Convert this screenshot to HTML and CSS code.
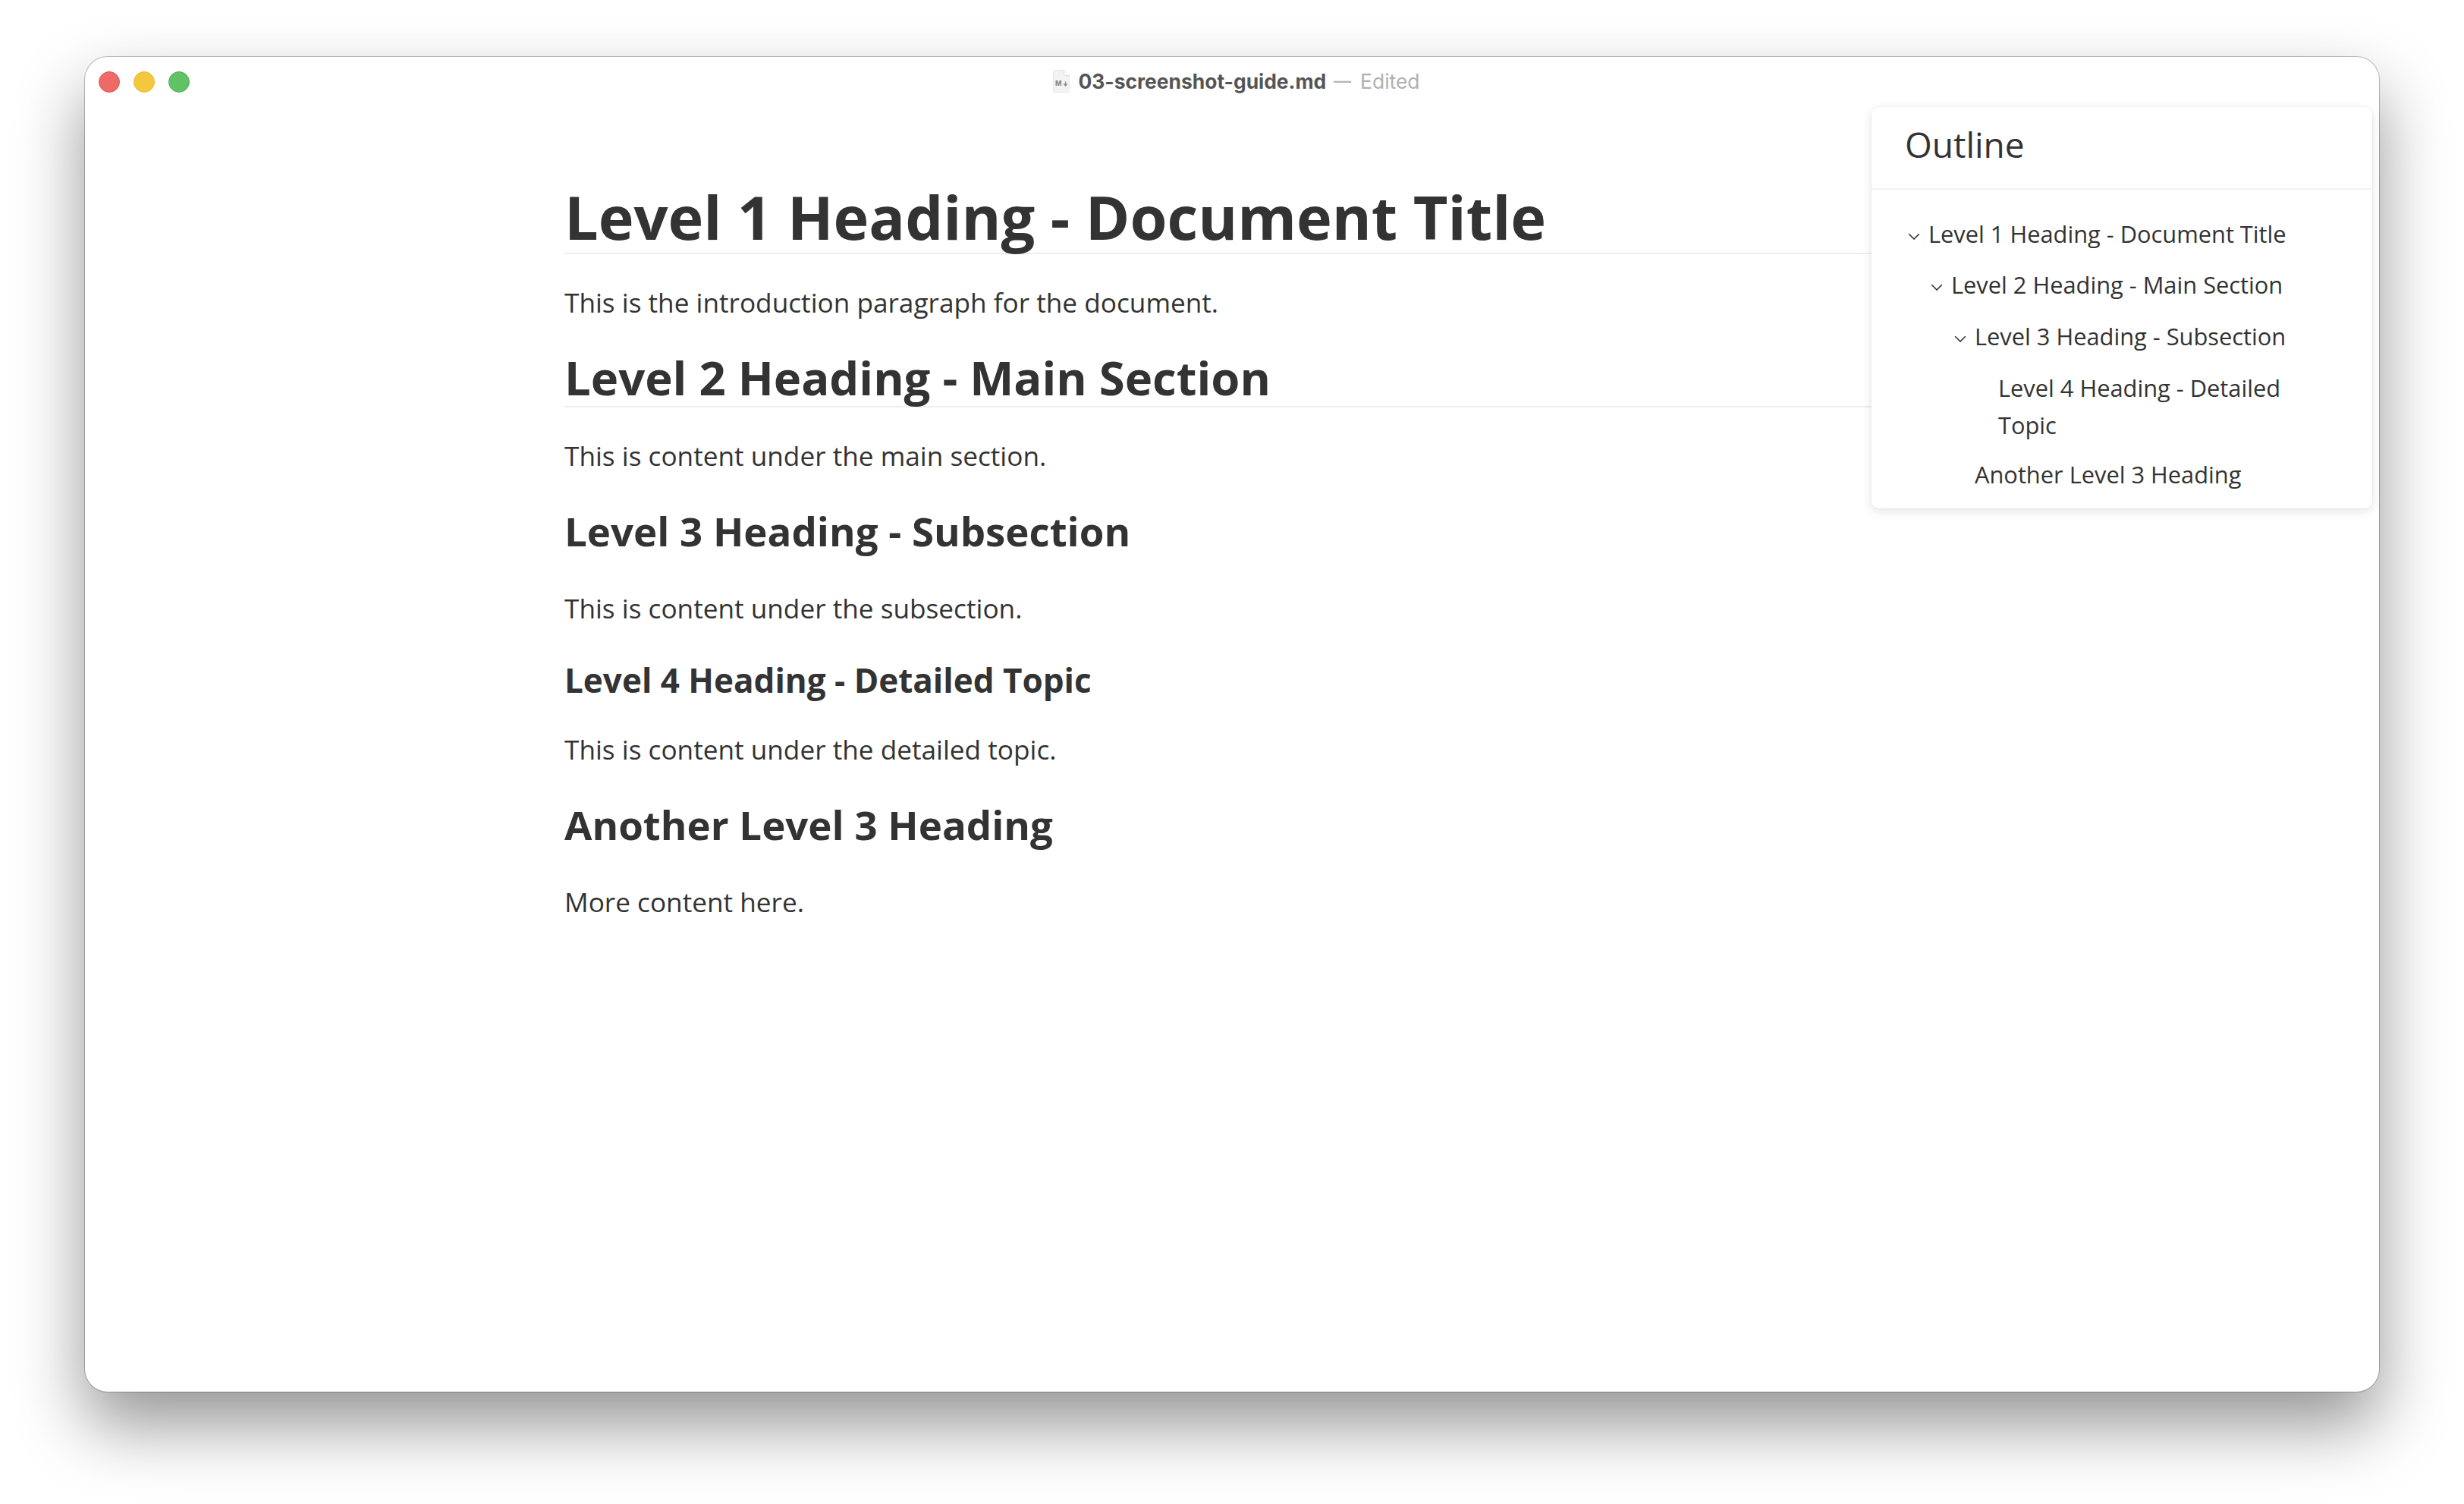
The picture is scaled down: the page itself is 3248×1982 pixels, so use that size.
FILE: index.html
```html
<!DOCTYPE html>
<html lang="en">
<head>
<meta charset="utf-8">
<title>03-screenshot-guide.md — Edited</title>
<link rel="stylesheet" href="styles.css">
</head>
<body>
<div class="window">
  <header class="titlebar">
    <div class="lights">
      <span class="light red"></span>
      <span class="light yellow"></span>
      <span class="light green"></span>
    </div>
    <div class="title">
      <svg class="file-icon" width="22" height="30" viewBox="0 0 22 30">
        <path d="M.5 2.500a2 2 0 0 1 2-2h12l7 7V27.500a2 2 0 0 1-2 2h-17a2 2 0 0 1-2-2z" fill="#f3f3f3" stroke="#e6e6e6"/>
        <path d="M14.500.5v5a2 2 0 0 0 2 2h5" fill="#fcfcfc" stroke="#dedede"/>
        <text class="md-mark" x="3" y="20.500">M</text>
        <path d="M16.500 15.500v5M14.200 18.500l2.300 2.400 2.300-2.400" fill="none" stroke="#8c8c8c" stroke-width="1.4"/>
      </svg>
      <span class="filename">03-screenshot-guide.md</span>
      <span class="dash">—</span>
      <span class="edited">Edited</span>
    </div>
  </header>
  <main class="doc">
    <h1>Level 1 Heading - Document Title</h1>
    <p>This is the introduction paragraph for the document.</p>
    <h2>Level 2 Heading - Main Section</h2>
    <p>This is content under the main section.</p>
    <h3>Level 3 Heading - Subsection</h3>
    <p>This is content under the subsection.</p>
    <h4>Level 4 Heading - Detailed Topic</h4>
    <p>This is content under the detailed topic.</p>
    <h3>Another Level 3 Heading</h3>
    <p>More content here.</p>
  </main>
  <aside class="outline">
    <div class="outline-title">Outline</div>
    <ul class="outline-list">
      <li class="item lvl1"><svg class="chev" width="16" height="9" viewBox="0 0 16 9"><path d="M1.200 1.200L8 8l6.800-6.800" fill="none" stroke="#333" stroke-width="1.6"/></svg>Level 1 Heading - Document Title</li>
      <li class="item lvl2"><svg class="chev" width="16" height="9" viewBox="0 0 16 9"><path d="M1.200 1.200L8 8l6.800-6.800" fill="none" stroke="#333" stroke-width="1.6"/></svg>Level 2 Heading - Main Section</li>
      <li class="item lvl3"><svg class="chev" width="16" height="9" viewBox="0 0 16 9"><path d="M1.200 1.200L8 8l6.800-6.800" fill="none" stroke="#333" stroke-width="1.6"/></svg>Level 3 Heading - Subsection</li>
      <li class="item lvl4">Level 4 Heading - Detailed Topic</li>
      <li class="item lvl3">Another Level 3 Heading</li>
    </ul>
  </aside>
</div>
</body>
</html>
```
FILE: styles.css
```css
* { box-sizing: border-box; }
html, body { margin: 0; height: 100%; background: #fff; }
body { padding: 75px 112px 148px; overflow: hidden; font-family: "Open Sans", sans-serif; color: #333; }
.window {
  position: relative;
  height: 1759px;
  background: #fff;
  border-radius: 30px;
  box-shadow: 0 0 0 1px rgba(0,0,0,.24), 0 44px 90px rgba(0,0,0,.42);
}
.titlebar { height: 64px; position: relative; display: flex; align-items: center; justify-content: center; }
.lights { position: absolute; left: 18px; top: 19px; display: flex; gap: 18px; }
.light { width: 28px; height: 28px; border-radius: 50%; }
.red { background: #ee6a67; border: 1px solid #e5524f; }
.yellow { background: #f4c73f; border: 1px solid #ecb930; }
.green { background: #61c265; border: 1px solid #52b356; }
.title { display: flex; align-items: center; font-family: Inter, sans-serif; font-size: 26.4px; padding-left: 11px; }
.file-icon { margin-right: 12px; }
.md-mark { font-family: Inter, sans-serif; font-size: 9px; font-weight: 800; fill: #8c8c8c; }
.filename { font-weight: 700; color: #555; }
.dash { color: #b5b5b5; font-size: 23px; font-weight: 500; margin: 0 12px 0 10px; }
.edited { color: #b0b0b0; font-weight: 400; }
.doc { width: 1760px; margin-left: 632px; padding-top: 99px; }
h1, h2, h3, h4 { margin: 0 0 35.2px; font-weight: 700; }
h1 { font-size: 79.2px; line-height: 1.2; border-bottom: 2px solid #eee; }
h2 { font-size: 61.6px; line-height: 1.2; border-bottom: 2px solid #eee; margin-top: 34.35px; }
h3 { font-size: 52.8px; line-height: 1.43; margin-top: 33.7px; }
h4 { font-size: 44px; line-height: 1.3; margin: 39px 0 33.7px; }
p { font-size: 35.2px; line-height: 1.6; margin: 28.16px 0; }
.outline {
  position: absolute; top: 66px; right: 9px; width: 660px; height: 529px;
  background: #fff; border-radius: 9px;
  box-shadow: 0 0 2px rgba(0,0,0,.1), 0 4px 14px rgba(0,0,0,.1);
}
.outline-title { height: 109px; padding: 19px 44px; font-size: 46px; line-height: 60px; border-bottom: 2px solid #f3f3f3; }
.outline-list { list-style: none; margin: 0; padding: 33.5px 45px 0; font-size: 30.8px; line-height: 49px; }
.item { margin-bottom: 18.7px; position: relative; }
.lvl1 { padding-left: 30px; }
.lvl2 { padding-left: 60px; }
.lvl3 { padding-left: 91px; }
.lvl4 { padding-left: 122px; margin-bottom: 16.5px; }
.chev { position: absolute; top: 23px; margin-left: -27px; }
```
